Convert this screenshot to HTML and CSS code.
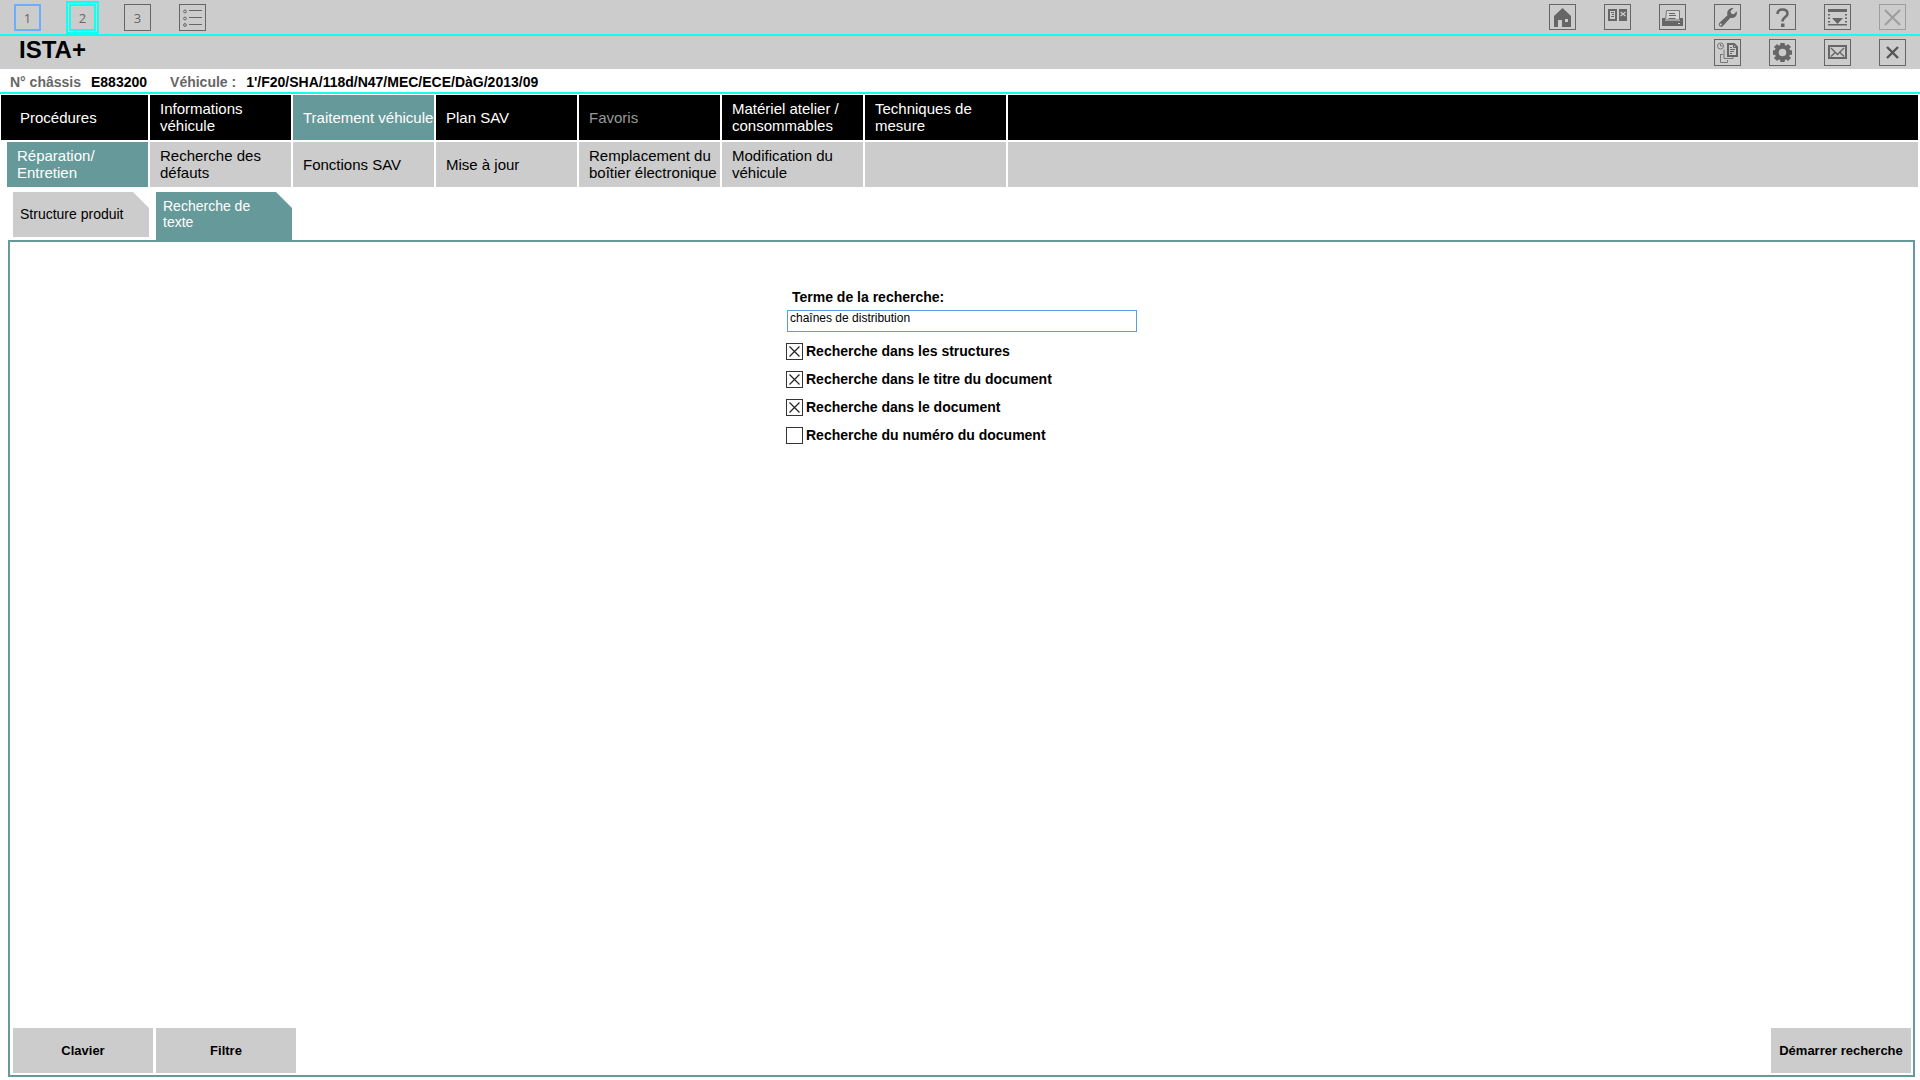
FILE: index.html
```html
<!DOCTYPE html>
<html lang="fr">
<head>
    <meta charset="UTF-8">
    <meta name="viewport" content="width=device-width, initial-scale=1.0">
    <title>ISTA+</title>
    <link rel="stylesheet" href="styles.css">
</head>
<body>

    <!-- Session bar -->
    <header class="bar session-bar">
        <div class="icons">
            <button class="icon-btn session">1</button>
            <button class="icon-btn session current">2</button>
            <button class="icon-btn">3</button>
            <button class="icon-btn" aria-label="Liste">
                <svg viewBox="0 0 25 25" fill="none" stroke="#666">
                    <circle cx="5" cy="6.5" r="1.4"/><circle cx="5" cy="13.5" r="1.4"/><circle cx="5" cy="20" r="1.4"/>
                    <path d="M9 5.5h13M9 12.5h13M9 19.5h13"/>
                </svg>
            </button>
        </div>
        <div class="icons tools">
            <button class="icon-btn" aria-label="Accueil">
                <svg viewBox="0 0 25 25" fill="#666">
                    <path fill-rule="evenodd" d="M12.500 3L21 11v11h-9v-7H8v7H4V11zM15 14v3h3v-3z"/>
                </svg>
            </button>
            <button class="icon-btn" aria-label="Fenêtres">
                <svg viewBox="0 0 25 25">
                    <path fill="#666" fill-rule="evenodd" d="M3 4h9v12H3zM5 6v8h5V6zM14 4h8v12h-8z"/>
                    <path fill="none" stroke="#666" d="M6 7.500h3M7 9.500h2M6 11.500h3"/>
                    <path fill="none" stroke="#ccc" stroke-width="1.300" d="M15.500 7l5 4M20.500 7l-5 4"/>
                </svg>
            </button>
            <button class="icon-btn" aria-label="Imprimer">
                <svg viewBox="0 0 25 25">
                    <path fill="#666" d="M2 13h3v3h15v-3h3v8H2z"/>
                    <path fill="#d4d4d4" stroke="#777" d="M6.500 5.500h13v9.500h-14z"/>
                    <path fill="none" stroke="#666" d="M9 8.500h6M9 10.500h7M8.500 13.500h7"/>
                    <path fill="#ccc" d="M18 18h2v1h-2z"/>
                </svg>
            </button>
            <button class="icon-btn" aria-label="Outils">
                <svg viewBox="0 0 25 25">
                    <path fill="#666" fill-rule="evenodd" d="M18.500 3l-3 3.200.8 2.500 2.500.6 2.900-3c.6 2.400.1 4.300-1.600 5.700-1.300 1-3 1.200-4.700.7L8 20.900c-1 1.100-2.500 1.200-3.500.300-1-1-1-2.500 0-3.400l8-7.600c-.7-1.900-.4-3.900 1.100-5.500C15 3.300 16.700 2.700 18.500 3zM6 18.500a1 1 0 1 0 .1 1.900A1 1 0 0 0 6 18.500z"/>
                </svg>
            </button>
            <button class="icon-btn" aria-label="Aide">
                <svg viewBox="0 0 25 25">
                    <path fill="none" stroke="#666" stroke-width="2.600" d="M7.500 9C7.500 6 9.500 4.500 12.500 4.500s5 1.500 5 4.200c0 3.300-5 3.600-5 7.800"/>
                    <path fill="#666" d="M11 18.500h3.500V22H11z"/>
                </svg>
            </button>
            <button class="icon-btn" aria-label="Réduire">
                <svg viewBox="0 0 25 25">
                    <path fill="#666" d="M3 4h19v3H3zM7 13h11l-5.500 6zM3 19h19v1.500H3z"/>
                    <path fill="none" stroke="#666" stroke-width="2" stroke-dasharray="1.500 2" d="M4 9v10M21 9v10"/>
                </svg>
            </button>
            <button class="icon-btn" aria-label="Fermer la session" disabled>
                <svg viewBox="0 0 25 25" fill="none" stroke="#666" stroke-width="2"><path d="M5 5l15 15M20 5L5 20"/></svg>
            </button>
        </div>
    </header>

    <!-- Title bar -->
    <div class="bar title-bar">
        <h1>ISTA+</h1>
        <div class="icons">
            <button class="icon-btn" aria-label="Historique">
                <svg viewBox="0 0 25 25" fill="none" stroke="#777">
                    <circle cx="5.500" cy="6" r="3"/><path d="M5.500 4v2h2"/>
                    <path d="M9 9.500v9h9v-2M5.500 14v8.500h7V20M5.500 14.500H8"/>
                    <path stroke="#666" stroke-width="2" fill="#ccc" d="M13 4h6l3 3v9h-9z"/>
                    <path stroke="#666" d="M18.500 4v3.500H22M15 7.500h2M15 9.500h5M15 11.500h4M15 13.500h2"/>
                </svg>
            </button>
            <button class="icon-btn" aria-label="Réglages">
                <svg viewBox="0 0 25 25" fill="none" stroke="#666">
                    <circle cx="12.500" cy="12.500" r="5.800" stroke-width="4"/>
                    <path stroke-width="4.500" d="M12.500 3v3M12.500 19v3M3 12.500h3M19 12.500h3M5.500 5.500l2 2M17.500 17.500l2 2M19.500 5.500l-2 2M7.500 17.500l-2 2"/>
                </svg>
            </button>
            <button class="icon-btn" aria-label="Messages">
                <svg viewBox="0 0 25 25" fill="none" stroke="#666">
                    <path stroke-width="2" d="M4 6h17v12H4z"/>
                    <path stroke-width="1.400" d="M6 8l6.500 6.500L19 8M6 16.500l4-4M19 16.500l-4-4"/>
                </svg>
            </button>
            <button class="icon-btn" aria-label="Fermer">
                <svg viewBox="0 0 25 25" fill="none" stroke="#555" stroke-width="2.400"><path d="M7 7l11 11M18 7L7 18"/></svg>
            </button>
        </div>
    </div>

    <!-- Vehicle -->
    <div class="vehicle">
        <span class="vehicle-label">N° châssis</span>
        <span class="vehicle-value">E883200</span>
        <span class="vehicle-label">Véhicule :</span>
        <span class="vehicle-value">1'/F20/SHA/118d/N47/MEC/ECE/DàG/2013/09</span>
    </div>

    <!-- Main menu -->
    <nav class="menu main-menu">
        <button class="first">Procédures</button>
        <button>Informations véhicule</button>
        <button class="active">Traitement véhicule</button>
        <button>Plan SAV</button>
        <button disabled>Favoris</button>
        <button>Matériel atelier / consommables</button>
        <button>Techniques de mesure</button>
        <div class="filler"></div>
    </nav>

    <!-- Sub menu -->
    <nav class="menu sub-menu">
        <button class="active">Réparation/ Entretien</button>
        <button>Recherche des défauts</button>
        <button>Fonctions SAV</button>
        <button>Mise à jour</button>
        <button>Remplacement du boîtier électronique</button>
        <button>Modification du véhicule</button>
        <div class="empty"></div>
        <div class="filler"></div>
    </nav>

    <!-- Tabs -->
    <nav class="tabs">
        <button>Structure produit</button>
        <button class="active">Recherche de texte</button>
    </nav>

    <main class="panel">
        <form id="searchForm" class="search-form">
            <label for="term" class="term-label">Terme de la recherche:</label>
            <input type="text" id="term" name="term" class="term-input" value="chaînes de distribution">

            <label class="option"><input type="checkbox" name="structures" checked>Recherche dans les structures</label>
            <label class="option"><input type="checkbox" name="title" checked>Recherche dans le titre du document</label>
            <label class="option"><input type="checkbox" name="document" checked>Recherche dans le document</label>
            <label class="option"><input type="checkbox" name="number">Recherche du numéro du document</label>
        </form>

        <div class="actions">
            <button type="button">Clavier</button>
            <button type="button">Filtre</button>
            <button type="submit" form="searchForm" class="start">Démarrer recherche</button>
        </div>
    </main>

</body>
</html>
```

FILE: styles.css
```css
* {
    box-sizing: border-box;
}

body {
    font-family: "Liberation Sans", Arial, sans-serif;
    display: flex;
    flex-direction: column;
    min-height: 100vh;
    margin: 0;
    padding-bottom: 3px;
    background-color: #fff;
    color: #000;
}

button {
    font-family: inherit;
    border: none;
    border-radius: 0;
    cursor: pointer;
}

/* Top bars */
.bar {
    display: flex;
    justify-content: space-between;
    align-items: flex-start;
    padding: 0 14px;
    background-color: #ccc;
}

.session-bar {
    height: 36px;
    padding-top: 4px;
    border-bottom: 2px solid #0ffff0;
}

.title-bar {
    height: 33px;
    padding-top: 3px;
}

.title-bar h1 {
    margin: 0;
    padding-left: 5px;
    font-size: 24px;
    line-height: 22px;
}

.icons {
    display: flex;
    gap: 28px;
}

.icon-btn {
    display: flex;
    justify-content: center;
    align-items: center;
    width: 27px;
    height: 27px;
    padding: 0;
    border: 1px solid #666;
    background-color: transparent;
    color: #666;
    font-family: "Open Sans", "Noto Sans", sans-serif;
    font-size: 13px;
    line-height: 24px;
}

.tools .icon-btn {
    height: 26px;
}

.icon-btn svg {
    display: block;
    width: 25px;
    height: 25px;
}

.icon-btn:disabled {
    opacity: 0.45;
}

.icon-btn.session {
    border: 2px solid #6aaeff;
}

.icon-btn.session.current {
    border-color: #0ffff0;
    outline: 2px solid #0ffff0;
    outline-offset: 1px;
}

/* Vehicle line */
.vehicle {
    display: flex;
    height: 25px;
    padding-left: 10px;
    border-bottom: 2px solid #0ffff0;
    font-size: 14px;
    font-weight: bold;
    line-height: 26px;
}

.vehicle-label {
    margin-right: 10px;
    color: #666;
}

.vehicle-value {
    margin-right: 23px;
}

/* Menus */
.menu {
    display: flex;
    gap: 2px;
    padding-right: 2px;
}

.menu button,
.menu .empty {
    flex: none;
    width: 141px;
    height: 45px;
    padding: 0 0 1px 10px;
    font-size: 15px;
    line-height: 17px;
    text-align: left;
}

.menu .filler {
    flex: 1;
}

.main-menu {
    margin-top: 1px;
    padding-left: 1px;
}

.main-menu button,
.main-menu .filler {
    background-color: #000;
    color: #fff;
}

.main-menu .first {
    width: 147px;
    padding-left: 19px;
}

.main-menu button:disabled {
    color: #999;
}

.sub-menu {
    margin-top: 2px;
    padding-left: 7px;
}

.sub-menu button,
.sub-menu .empty,
.sub-menu .filler {
    background-color: #ccc;
    color: #000;
}

.menu button.active {
    background-color: #699;
    color: #fff;
}

/* Tabs */
.tabs {
    display: flex;
    align-items: flex-start;
    gap: 7px;
    margin-top: 5px;
    padding-left: 13px;
    height: 48px;
}

.tabs button {
    width: 136px;
    height: 45px;
    padding: 0 30px 2px 7px;
    background-color: #ccc;
    color: #000;
    font-size: 14px;
    line-height: 16px;
    text-align: left;
    white-space: nowrap;
    clip-path: polygon(0 0, 120px 0, 100% 16px, 100% 100%, 0 100%);
}

.tabs button.active {
    height: 48px;
    padding-bottom: 5px;
    background-color: #699;
    color: #fff;
    white-space: normal;
}

/* Content */
.panel {
    flex: 1;
    display: flex;
    flex-direction: column;
    justify-content: space-between;
    margin: 0 5px 0 8px;
    padding: 46px 2px 2px 3px;
    border: 2px solid #699;
}

.search-form {
    display: flex;
    flex-direction: column;
    align-self: center;
    width: 352px;
}

.term-label {
    padding-left: 6px;
    font-size: 14px;
    font-weight: bold;
    line-height: 18px;
}

.term-input {
    height: 22px;
    margin: 4px 1px 5px;
    padding: 0 2px 6px;
    border: 1px solid #569de5;
    border-radius: 0;
    outline: none;
    font-family: inherit;
    font-size: 12px;
}

.option {
    display: flex;
    align-items: center;
    gap: 3px;
    height: 28px;
    font-size: 14px;
    font-weight: bold;
}

.option input {
    appearance: none;
    width: 17px;
    height: 17px;
    margin: 0;
    border: 1px solid #333;
    background-color: #fff;
}

.option input:checked {
    background-image: url("data:image/svg+xml,%3Csvg xmlns='http://www.w3.org/2000/svg' viewBox='0 0 15 15'%3E%3Cpath d='M2.500 2.500l10 10M12.500 2.500l-10 10' stroke='%23222' stroke-width='1.200'/%3E%3C/svg%3E");
}

.actions {
    display: flex;
    gap: 3px;
}

.actions button {
    width: 140px;
    height: 45px;
    padding: 0;
    background-color: #ccc;
    color: #000;
    font-size: 13px;
    font-weight: bold;
    white-space: nowrap;
}

.actions .start {
    margin-left: auto;
}
```
